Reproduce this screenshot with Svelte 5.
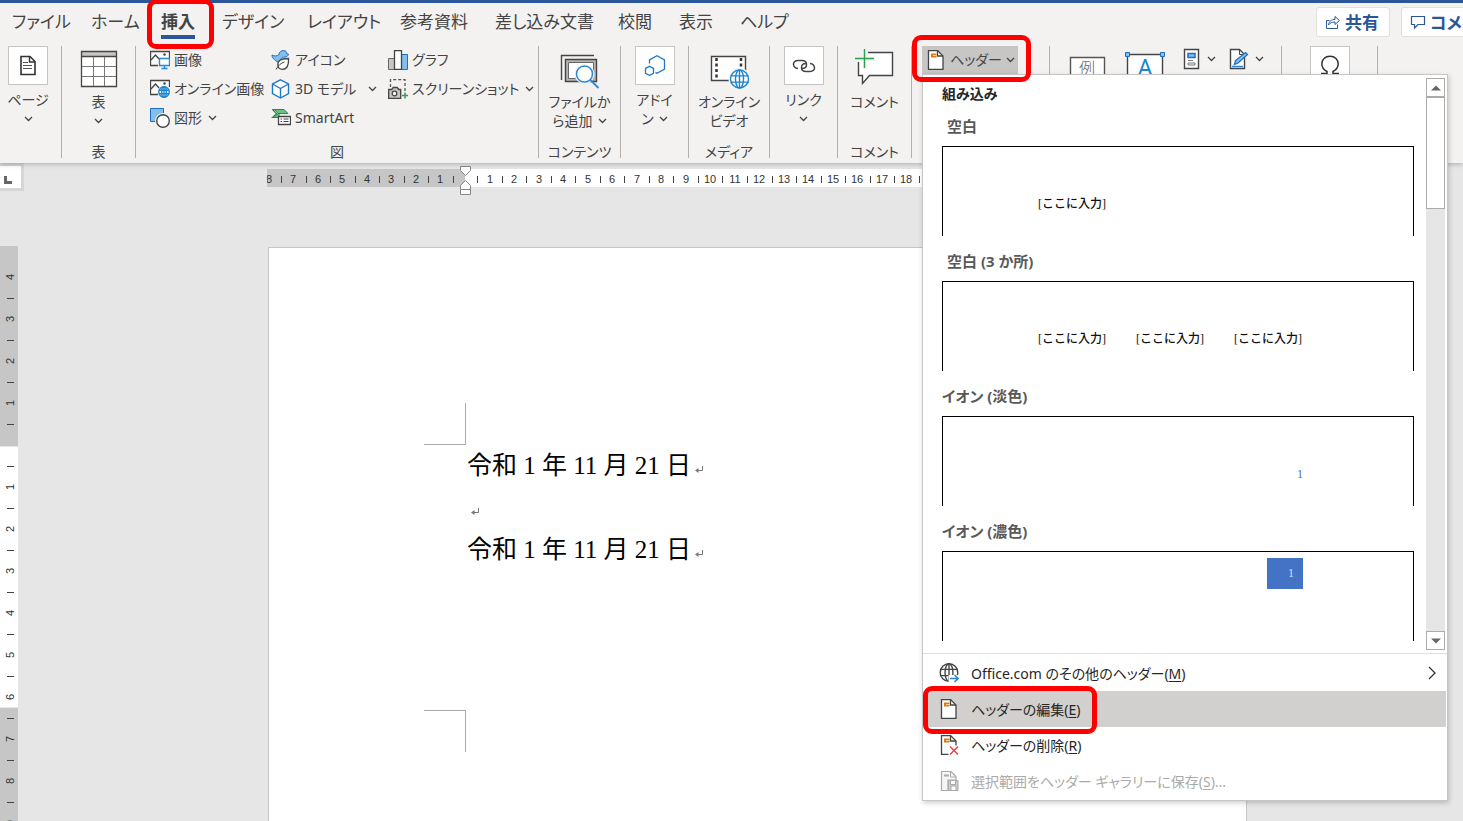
<script>
  const tabs = [
    { label: 'ファイル', w: 79 },
    { label: 'ホーム', w: 70 },
    { label: '挿入', w: 61, active: true },
    { label: 'デザイン', w: 85 },
    { label: 'レイアウト', w: 93 },
    { label: '参考資料', w: 95 },
    { label: '差し込み文書', w: 123 },
    { label: '校閲', w: 61 },
    { label: '表示', w: 61 },
    { label: 'ヘルプ', w: 60 },
  ];
  const tabColumns = tabs.map((t) => t.w + 'px').join(' ');

  const pictures = [
    { icon: 'image', label: '画像' },
    { icon: 'icons', label: 'アイコン' },
    { icon: 'chart', label: 'グラフ' },
    { icon: 'online', label: 'オンライン画像' },
    { icon: 'cube', label: '3D モデル', menu: true, wide: true },
    { icon: 'screenshot', label: 'スクリーンショット', menu: true },
    { icon: 'shapes', label: '図形', menu: true },
    { icon: 'smartart', label: 'SmartArt' },
  ];

  const gallery = [
    { title: '空白', inset: true, fields: 1 },
    { title: '空白 (3 か所)', inset: true, fields: 3 },
    { title: 'イオン (淡色)', number: 'light' },
    { title: 'イオン (濃色)', number: 'dark' },
  ];

  const commands = [
    { icon: 'globe', label: 'Office.com のその他のヘッダー', key: 'M', more: true },
    { icon: 'edit', label: 'ヘッダーの編集', key: 'E', active: true },
    { icon: 'remove', label: 'ヘッダーの削除', key: 'R' },
    { icon: 'save', label: '選択範囲をヘッダー ギャラリーに保存', key: 'S', tail: '...', disabled: true },
  ];

  const hUnit = 24.52;
  const hMarks = [];
  for (let i = -16; i <= 62; i++) {
    if (i === 0) continue;
    hMarks.push({ x: Math.round(198 + (i * hUnit) / 2), n: i % 2 === 0 ? Math.abs(i / 2) : null });
  }
  const vMarks = [];
  for (let i = -8; i <= 18; i++) {
    if (i === 0) continue;
    vMarks.push({ y: 199 + i * 21, n: i % 2 === 0 ? Math.abs(i / 2) : null });
  }
</script>

{#snippet chevron()}
  <svg class="chevron" width="9" height="6" viewBox="0 0 9 6" aria-hidden="true"><path d="M1 1l3.5 3.5L8 1" fill="none" stroke="#444" stroke-width="1.3" /></svg>
{/snippet}

{#snippet globe(cx, cy, r, color)}
  <g fill="none" stroke={color} stroke-width="1.4">
    <circle {cx} {cy} {r} fill="#fff" />
    <ellipse {cx} {cy} rx={r * 0.45} ry={r} />
    <path d={`M${cx} ${cy - r}v${2 * r}M${cx - r} ${cy - r * 0.35}h${2 * r}M${cx - r} ${cy + r * 0.35}h${2 * r}`} />
  </g>
{/snippet}

{#snippet mark()}
  <svg class="mark" width="9" height="9" viewBox="0 0 9 9" aria-hidden="true"><path d="M7.5 0v4.5H2" fill="none" stroke="#777" /><path d="M0 4.5L3.5 2v5z" fill="#777" /></svg>
{/snippet}

{#snippet icon(name)}
  <svg class="icon" width="20" height="20" viewBox="0 0 20 20" fill="none" aria-hidden="true">
    {#if name === 'image' || name === 'online'}
      <path d="M8 15.5H.5v-14h19V8" fill="#fafafa" stroke="#444" stroke-width="1.3" />
      <path d="M1 10l4.5-5L9 9" stroke="#444" stroke-width="1.3" />
      <circle cx="14.5" cy="4.5" r="1.2" fill="#444" />
      {#if name === 'image'}
        <path d="M9.5 8.500h10v7h-10zM14.500 15.500v3M11.500 18.500h6" fill="#fff" stroke="#2b88d8" stroke-width="1.400" />
      {:else}
        {@render globe(14, 13, 5.2, '#1e84cf')}
      {/if}
    {:else if name === 'shapes'}
      <path d="M.5.500h13v13H.5z" fill="#83beec" stroke="#1e6fbf" />
      <circle cx="13" cy="13" r="8" fill="#f3f2f1" />
      <circle cx="13" cy="13" r="6.3" fill="#fff" stroke="#444" stroke-width="1.4" />
    {:else if name === 'icons'}
      <path d="M1 5c2.500 1.500 5 1.200 7-.5C8 2 10 .6 12.500.6 15 .6 16 2.200 15.500 3.500l2 .7c-.5 2-2 2.800-3.500 2.800-2 0-3.500 1-4.500 2.500C8 12.500 5 12 3.500 9.500 1.800 8.500 1 7 1 5z" fill="#83beec" stroke="#1e6fbf" />
      <path d="M7 15.500C6 11.500 9 8.500 17.500 8.500c.4 6.500-1.500 10.800-6 10.800C8.500 19.300 7.200 18 7 15.500z" fill="#fff" stroke="#444" stroke-width="1.300" />
      <path d="M5 19.500c2-4 5-6.500 8.500-7.500" stroke="#444" />
    {:else if name === 'cube'}
      <path d="M9.500.8l8 4.200v9.500l-8 4.500-8-4.500V5z" fill="#fff" stroke="#1e78c8" stroke-width="1.400" />
      <path d="M1.500 5l8 4.500 8-4.500M9.500 9.500V19" stroke="#1e78c8" stroke-width="1.400" />
    {:else if name === 'smartart'}
      <path d="M1.500 1.500H13l4 4H7L3.500 1.500zM3 9.500L7 5.500h1v4z" fill="#6cc088" stroke="#218a42" />
      <path d="M1.500 1.500l4 4.200-4 3.800H7" stroke="#218a42" stroke-width="1.200" />
      <path d="M7.500 8.500h12v8h-12z" fill="#fff" stroke="#444" stroke-width="1.300" />
      <path d="M9.500 11H11M12.500 11h5M9.500 13.500H11M12.500 13.500h5" stroke="#444" />
    {:else if name === 'chart'}
      <path d="M.5 8.500h6v11h-6z" fill="#c8c6c4" stroke="#666" />
      <path d="M13.500 4.500h6v15h-6z" fill="#83beec" stroke="#1e6fbf" />
      <path d="M6.500.5h7v19h-7z" fill="#fff" stroke="#444" stroke-width="1.300" />
    {:else if name === 'screenshot'}
      <path d="M2.500 8V.7h14.500V13" stroke="#555" stroke-width="1.300" stroke-dasharray="3 2" />
      <path d="M.7 10.500h3l1.500-2h4l1.500 2h2v8.800H.7z" fill="#c8c6c4" stroke="#444" stroke-width="1.300" />
      <circle cx="6.500" cy="14.500" r="2.300" fill="#fff" stroke="#444" stroke-width="1.300" />
      <path d="M14 16.500h6M17 13.500v6" stroke="#2ea051" stroke-width="1.500" />
    {:else if name === 'globe'}
      {@render globe(10, 9.500, 8.800, '#444')}
      <path d="M9.500 12H20v8H9.500z" fill="#fff" />
      <path d="M11 15.500h8M15.500 12l3.500 3.500-3.500 3.500" stroke="#2b88d8" stroke-width="1.600" />
    {:else if name === 'edit' || name === 'remove'}
      <path d="M2.500.5h9l5.500 5.500v13.500H2.500z" fill="#fff" stroke="#444" stroke-width="1.300" />
      <path d="M11.500.5V6H17" stroke="#444" stroke-width="1.300" />
      <path d="M5 3.500h5.500v4H5z" fill="#e07a10" />
      <path d="M7 5.500h3.500" stroke="#f8d9b0" />
      {#if name === 'remove'}
        <path d="M9.500 10.500H20V20H9.500z" fill="#fff" />
        <path d="M11 11.500l8 8M19 11.500l-8 8" stroke="#e03c3c" stroke-width="1.300" />
      {/if}
    {:else if name === 'save'}
      <path d="M2.500.5H12l5 5V9H9v10.500H2.500z" fill="#f5f5f5" stroke="#aaa" stroke-width="1.200" />
      <path d="M11.500.5V6H17" stroke="#aaa" />
      <path d="M5 4.500h5" stroke="#aaa" stroke-width="2" />
      <path d="M9.500 9.500H19v10H9.500z" fill="#ccc" stroke="#aaa" />
      <path d="M11.500 9.500h5v4h-5zM12 19v-4h5v4" fill="#fff" stroke="#aaa" />
    {/if}
  </svg>
{/snippet}

<svelte:head><title>Word</title></svelte:head>

<div class="app">
  <header class="ribbon">
    <div class="top">
      <nav class="tabs" style:grid-template-columns={tabColumns}>
        {#each tabs as tab}
          <button class="tab" class:active={tab.active}>
            <span>{tab.label}</span>
            {#if tab.active}<i class="ring ring-tab"></i>{/if}
          </button>
        {/each}
      </nav>
      <div class="actions">
        <button class="action">
          <svg width="16" height="16" viewBox="0 0 16 16" fill="none" stroke="#2b579a" aria-hidden="true"><path d="M4.500 6.500h-3v8h11v-4" /><path d="M3.500 11c.5-4 3-5.500 6.500-5.500V2.500l4.500 4-4.500 4V8C7 8 5 8.800 3.500 11z" /></svg>
          共有
        </button>
        <button class="action">
          <svg width="16" height="16" viewBox="0 0 16 16" fill="none" stroke="#2b579a" stroke-width="1.200" aria-hidden="true"><path d="M1.500 2.500h13v8H8L4.500 14v-3.500h-3z" /></svg>
          コメント
        </button>
      </div>
    </div>

    <div class="panel">
      <section class="group page-group">
        <button class="big">
          <span class="tile"><svg width="20" height="22" viewBox="0 0 20 22" fill="none" stroke="#333" aria-hidden="true"><path d="M3 1.500h9l5 5v13H3z" stroke-width="1.600" /><path d="M11.500 1.500V7H17" stroke-width="1.400" /><path d="M5 7.500h5M5 10.500h9M5 13.500h9" stroke="#555" /></svg></span>
          <span>ページ</span>
          <span>{@render chevron()}</span>
        </button>
      </section>

      <section class="group table-group">
        <button class="big">
          <svg width="44" height="46" viewBox="0 0 44 46" aria-hidden="true">
            <path d="M4.500 5.500h35v35h-35z" fill="#fff" /><path d="M4.500 5.500h35v5h-35z" fill="#c8c6c4" />
            <path d="M4.500 5.500h35v35h-35zM4.500 10.500h35" fill="none" stroke="#444" stroke-width="1.300" />
            <path d="M16.500 11v29M27.500 11v29M5 20.500h34M5 30.500h34" stroke="#777" />
          </svg>
          <span>表</span>
          <span>{@render chevron()}</span>
        </button>
        <h2>表</h2>
      </section>

      <section class="group pictures-group">
        <div class="rows">
          {#each pictures as p}
            <button class="small" class:wide={p.wide}>
              {@render icon(p.icon)}
              <span>{p.label}</span>
              {#if p.menu}{@render chevron()}{/if}
            </button>
          {/each}
        </div>
        <h2>図</h2>
      </section>

      <section class="group files-group">
        <button class="big">
          <svg width="44" height="46" viewBox="0 0 44 46" fill="none" aria-hidden="true">
            <path d="M4.500 34V9.500H37" stroke="#444" stroke-width="1.400" />
            <path d="M8.500 13.500h31v22h-31z" fill="#b8b6b4" stroke="#444" stroke-width="1.400" />
            <path d="M11.500 16.500h25v16h-25z" fill="#fff" stroke="#666" />
            <circle cx="27.500" cy="28" r="10" fill="#f3f2f1" />
            <circle cx="27.500" cy="28" r="8" fill="#fff" stroke="#2b88d8" stroke-width="1.500" />
            <path d="M33.500 34l8 8" stroke="#2b88d8" stroke-width="1.800" />
          </svg>
          <span>ファイルか</span>
          <span>ら追加 {@render chevron()}</span>
        </button>
        <h2>コンテンツ</h2>
      </section>

      <section class="group tile-group">
        <button class="big">
          <span class="tile"><svg width="24" height="24" viewBox="0 0 24 24" fill="none" stroke="#1e78c8" stroke-width="1.300" aria-hidden="true"><path d="M6.500 9.500V6l7.500-4.200L21.500 6v9L14 19.200 12.500 18.400" /><path d="M6.500 12.300l4 2v5l-4 2-4-2v-5z" /></svg></span>
          <span>アドイ</span>
          <span>ン {@render chevron()}</span>
        </button>
      </section>

      <section class="group media-group">
        <button class="big">
          <svg width="44" height="46" viewBox="0 0 44 46" fill="none" aria-hidden="true">
            <path d="M4.500 10.500h34v24h-34z" fill="#fff" stroke="#444" stroke-width="1.400" />
            <path d="M9.500 12v22M34 12v22" stroke="#333" stroke-width="2.500" stroke-dasharray="3 2.500" />
            <circle cx="32.500" cy="33" r="11" fill="#f3f2f1" />
            {@render globe(32.500, 33, 9, '#1e84cf')}
          </svg>
          <span>オンライン</span>
          <span>ビデオ</span>
        </button>
        <h2>メディア</h2>
      </section>

      <section class="group tile-group">
        <button class="big">
          <span class="tile"><svg width="24" height="20" viewBox="0 0 24 20" fill="none" stroke="#444" stroke-width="1.500" aria-hidden="true"><path d="M6 12.500C.5 12-.5 4.500 6 4.500h4c6 0 6 8 0 8" /><path d="M18 7.500c5.500.5 6.500 8 0 8h-4c-6 0-6-8 0-8" /></svg></span>
          <span>リンク</span>
          <span>{@render chevron()}</span>
        </button>
      </section>

      <section class="group comment-group">
        <button class="big">
          <svg width="44" height="46" viewBox="0 0 44 46" fill="none" aria-hidden="true">
            <path d="M5.500 16V29.500h4v8l7-8h23V6.500H15" fill="#fff" stroke="#444" stroke-width="1.400" />
            <path d="M10 3h5v8h7v4h-8v8h-4v-8H2V9h8z" fill="#f3f2f1" />
            <path d="M11.500 3v19M2 12.500h19" stroke="#2ea051" stroke-width="1.400" />
          </svg>
          <span>コメント</span>
        </button>
        <h2>コメント</h2>
      </section>

      <section class="group header-group">
        <button class="header-button" aria-expanded="true">
          {@render icon('edit')}
          <span>ヘッダー</span>
          {@render chevron()}
        </button>
        <i class="ring ring-header"></i>

        <div class="popup">
          <div class="gallery">
            <div class="gallery-list">
              <h3>組み込み</h3>
              {#each gallery as g}
                <button class="entry">
                  <span class="entry-title" class:inset={g.inset}>{g.title}</span>
                  <span class="preview" class:end={g.number} class:top={g.number === 'dark'}>
                    {#if g.fields}
                      {#each Array(g.fields) as _}<span class="field">[ここに入力]</span>{/each}
                    {:else}
                      <span class="number {g.number}">1</span>
                    {/if}
                  </span>
                </button>
              {/each}
            </div>
            <div class="scroll">
              <button class="arrow" aria-label="上へ"><svg width="10" height="6" viewBox="0 0 10 6"><path d="M0 5.500L5 .5l5 5z" fill="#666" /></svg></button>
              <div class="thumb"></div>
              <button class="arrow down" aria-label="下へ"><svg width="10" height="6" viewBox="0 0 10 6"><path d="M0 .5l5 5 5-5z" fill="#666" /></svg></button>
            </div>
          </div>
          <div class="commands">
            {#each commands as c}
              <button class="command" class:active={c.active} disabled={c.disabled}>
                {@render icon(c.icon)}
                <span>{c.label}(<u>{c.key}</u>){c.tail ?? ''}</span>
                {#if c.more}<svg class="more" width="8" height="14" viewBox="0 0 8 14" aria-hidden="true"><path d="M1 1l6 6-6 6" fill="none" stroke="#333" stroke-width="1.300" /></svg>{/if}
                {#if c.active}<i class="ring ring-command"></i>{/if}
              </button>
            {/each}
          </div>
        </div>
      </section>

      <section class="group text-group">
        <button class="plain" aria-label="テキスト ボックス"><svg width="38" height="30" viewBox="0 0 38 30" aria-hidden="true"><path d="M1.500 30V11.500h34V30" fill="#fff" stroke="#555" stroke-width="1.400" /><text x="18" y="28" text-anchor="middle" font-size="16" font-weight="300" fill="#666">例</text></svg></button>
        <button class="plain" aria-label="ワードアート"><svg width="40" height="30" viewBox="0 0 40 30" aria-hidden="true"><path d="M2.500 30V8.500h35V30" fill="#fff" stroke="#444" stroke-width="1.400" /><path d="M.5 6.500h4v4h-4zM35.500 6.500h4v4h-4z" fill="#83beec" stroke="#1e6fbf" /><text x="20" y="30" text-anchor="middle" font-size="23" fill="#1e84cf">A</text></svg></button>
        <div class="pair">
          <button class="plain" aria-label="クイック パーツ"><svg width="18" height="22" viewBox="0 0 18 22" fill="none" aria-hidden="true"><path d="M1.500 1.500h14v19h-14z" fill="#fff" stroke="#444" stroke-width="1.400" /><path d="M5 5.500h7v4H5z" fill="#83beec" stroke="#1e6fbf" stroke-width="1.500" /><path d="M5 12.500h5M5 17h7v-2H5z" stroke="#777" /></svg>{@render chevron()}</button>
          <button class="plain" aria-label="署名欄"><svg width="20" height="22" viewBox="0 0 20 22" fill="none" aria-hidden="true"><path d="M1.500 1.500h9l5 5v14h-14z" fill="#fff" stroke="#444" stroke-width="1.400" /><path d="M10.500 1.500v5h5" stroke="#444" /><path d="M3 18.500h11" stroke="#2b88d8" stroke-width="1.500" /><path d="M5.500 16.500l1-4 10-8 2 2-9.500 8.500z" fill="#83beec" stroke="#1e6fbf" stroke-width="1.300" /></svg>{@render chevron()}</button>
        </div>
      </section>

      <section class="group symbol-group">
        <button class="big" aria-label="記号と特殊文字"><span class="tile"><svg width="20" height="22" viewBox="0 0 20 22" fill="none" stroke="#333" stroke-width="1.500" aria-hidden="true"><path d="M1 18.500h6v-2C3.500 14.500 1.800 12 1.800 9 1.800 4.500 5 1.200 10 1.200S18.200 4.500 18.200 9c0 3-1.700 5.500-5.200 7.500v2h6" /></svg></span></button>
      </section>
    </div>
  </header>

  <main class="workspace">
    <div class="ruler-row">
      <button class="corner" aria-label="タブ"><svg width="9" height="8" viewBox="0 0 9 8"><path d="M1.500 0v6.500H8" fill="none" stroke="#666" stroke-width="3" /></svg></button>
      <div class="hruler">
        <svg width="980" height="32" aria-hidden="true">
          <path d="M0 6h198v18H0z" fill="#c6c6c6" /><path d="M198 6h782v18H198z" fill="#fff" />
          {#each hMarks as m}
            {#if m.n}<text x={m.x} y="20" text-anchor="middle" class="digit">{m.n}</text>{:else}<path d={`M${m.x + 0.5} 13v7`} stroke="#444" />{/if}
          {/each}
          <path d="M193.500 3.500h10v4l-5 5-5-5zM193.500 26.500v-4l5-5 5 5v9h-10zM193.500 26.500h10" fill="#fff" stroke="#888" />
        </svg>
      </div>
    </div>
    <div class="doc-row">
      <svg class="vruler" width="18" height="575" aria-hidden="true">
        <path d="M0 0h18v200H0zM0 462h18v120H0z" fill="#c6c6c6" /><path d="M0 201h18v260H0z" fill="#fff" />
        {#each vMarks as m}
          {#if m.n}<text text-anchor="middle" transform={`translate(14 ${m.y}) rotate(-90)`} class="digit">{m.n}</text>{:else}<path d={`M7 ${m.y + 0.5}h7`} stroke="#444" />{/if}
        {/each}
      </svg>
      <article class="paper">
        <div class="crop first"></div>
        <div class="text">
          <p>令和 1 年 11 月 21 日{@render mark()}</p>
          <p>{@render mark()}</p>
          <p>令和 1 年 11 月 21 日{@render mark()}</p>
        </div>
        <div class="crop last"></div>
      </article>
    </div>
  </main>
</div>

<style>
  :global(body) { margin: 0; }
  .app {
    min-height: 100vh;
    display: flex;
    flex-direction: column;
    overflow: hidden;
    background: #e6e6e6;
    color: #444;
    font-family: "Noto Sans", "Noto Sans CJK JP", sans-serif;
    font-size: 14px;
    line-height: 19px;
    font-feature-settings: "palt";
  }
  button {
    font: inherit;
    font-feature-settings: inherit;
    color: inherit;
    background: none;
    border: 0;
    padding: 0;
    margin: 0;
    text-align: left;
  }
  svg { display: block; flex: none; }
  h2, h3, p { margin: 0; font-weight: 400; }

  .ribbon {
    position: relative;
    z-index: 2;
    background: #f3f2f1;
    border-top: 3px solid #2b579a;
    box-shadow: 0 1px 5px rgba(0, 0, 0, 0.25);
  }
  .top { display: flex; height: 38px; }
  .tabs { display: grid; flex: 1; padding-left: 12px; }
  .tab {
    position: relative;
    display: flex;
    align-items: flex-start;
    font-size: 17px;
    line-height: 38px;
    white-space: nowrap;
  }
  .tab.active span {
    height: 36px;
    box-sizing: border-box;
    font-weight: 700;
    border-bottom: 4px solid #2b579a;
  }
  .actions { display: flex; gap: 11px; flex: 0 0 147px; min-width: 0; padding-top: 4px; }
  .action {
    display: flex;
    flex: none;
    align-items: center;
    gap: 4px;
    height: 30px;
    padding: 0 10px 0 8px;
    box-sizing: border-box;
    background: #fff;
    border: 1px solid #e1dfdd;
    border-radius: 3px;
    color: #2b579a;
    font-size: 17px;
    font-weight: 700;
    white-space: nowrap;
  }

  .panel { display: flex; padding: 5px 0; }
  .group {
    position: relative;
    display: flex;
    flex-direction: column;
    flex: none;
    align-items: center;
    justify-content: space-between;
    height: 112px;
    box-sizing: border-box;
    border-right: 1px solid #b3b0ad;
  }
  .group h2 { font-size: 14px; line-height: 13px; }
  .page-group { width: 62px; padding-right: 5px; }
  .table-group { width: 74px; }
  .pictures-group { width: 403px; }
  .files-group { width: 82px; }
  .tile-group { width: 68px; }
  .media-group { width: 81px; }
  .comment-group { width: 74px; }
  .header-group { width: 138px; align-items: flex-start; padding-left: 10px; }
  .text-group { width: 232px; flex-direction: row; justify-content: flex-start; align-items: flex-start; padding-left: 19px; gap: 18px; }
  .pair { display: flex; gap: 13px; padding-top: 2px; }
  .symbol-group { width: 96px; }

  .big { display: flex; flex-direction: column; align-items: center; white-space: nowrap; }
  .big > span:not(.tile) { display: flex; align-items: center; gap: 5px; height: 19px; }
  .tile {
    display: flex;
    align-items: center;
    justify-content: center;
    width: 40px;
    height: 39px;
    box-sizing: border-box;
    margin-bottom: 5px;
    background: #fff;
    border: 1px solid #c8c6c4;
  }
  .rows {
    display: grid;
    grid-template-columns: 121px 117px 1fr;
    grid-auto-rows: 29px;
    align-self: stretch;
    padding-left: 14px;
  }
  .small { display: flex; align-items: center; gap: 4px; padding-bottom: 2px; white-space: nowrap; }
  .small .chevron { margin-left: 2px; }
  .small.wide .chevron { margin-left: 8px; }
  .plain { display: flex; align-items: center; gap: 6px; }

  .header-button {
    display: flex;
    align-items: center;
    gap: 4px;
    width: 96px;
    height: 29px;
    padding: 0 0 2px 4px;
    box-sizing: border-box;
    background: #c8c6c4;
    white-space: nowrap;
  }

  .ring {
    position: absolute;
    z-index: 9;
    box-sizing: border-box;
    border: 5px solid #f00;
    border-radius: 9px;
    pointer-events: none;
  }
  .ring-tab { left: -14px; top: -4px; width: 67px; height: 50px; }
  .ring-header { left: 0; top: -11px; width: 119px; height: 47px; }
  .ring-command { left: -1px; top: -5px; width: 174px; height: 48px; }

  .popup {
    position: absolute;
    z-index: 5;
    left: 10px;
    top: 28px;
    width: 526px;
    box-sizing: border-box;
    padding-bottom: 1px;
    background: #fff;
    border: 1px solid #c6c6c6;
    box-shadow: 1px 2px 5px rgba(0, 0, 0, 0.2);
    color: #262626;
  }
  .gallery { display: flex; padding-right: 2px; border-bottom: 1px solid #e1dfdd; }
  .gallery-list { flex: 1; padding: 11px 12px 12px 19px; }
  h3 { font-size: 14px; line-height: 15px; font-weight: 700; }
  .entry { display: block; width: 100%; }
  .entry-title {
    display: block;
    padding: 15px 0 10px;
    font-size: 15px;
    line-height: 20px;
    font-weight: 700;
    color: #595959;
  }
  .inset { padding-left: 5px; }
  .preview {
    display: flex;
    align-items: center;
    gap: 30px;
    height: 90px;
    box-sizing: border-box;
    padding: 24px 0 0 95px;
    border: 1px solid #000;
    border-bottom: 0;
    font: 500 12px/16px "Liberation Serif", "Noto Sans CJK JP", serif;
    font-feature-settings: normal;
    color: #111;
  }
  .preview.end { justify-content: flex-end; padding-right: 110px; }
  .preview.top { align-items: flex-start; padding-top: 6px; }
  .number { color: #4472c4; }
  .number.dark {
    width: 36px;
    height: 31px;
    line-height: 31px;
    padding-right: 9px;
    box-sizing: border-box;
    text-align: right;
    background: #4472c4;
    color: #d6e0f2;
  }
  .scroll { display: flex; flex-direction: column; width: 19px; margin: 3px 0; background: #e6e6e6; }
  .arrow {
    display: flex;
    align-items: center;
    justify-content: center;
    height: 19px;
    box-sizing: border-box;
    background: #fff;
    border: 1px solid #ababab;
  }
  .arrow.down { margin-top: auto; }
  .thumb { height: 112px; box-sizing: border-box; background: #fff; border: 1px solid #ababab; }

  .commands { padding: 1px 1px 0; }
  .command {
    position: relative;
    display: flex;
    align-items: center;
    gap: 12px;
    width: 100%;
    height: 36px;
    padding: 0 10px 0 15px;
    white-space: nowrap;
  }
  .command.active { background: #d2d0ce; }
  .command:disabled { color: #aaa; }
  .command u { text-underline-offset: 2px; }
  .more { margin-left: auto; }

  .workspace { flex: 1; display: flex; flex-direction: column; }
  .ruler-row { display: flex; height: 83px; }
  .corner {
    display: flex;
    align-items: center;
    justify-content: center;
    width: 24px;
    height: 28px;
    box-sizing: border-box;
    padding: 6px 4px 0 0;
    background: #fff;
    border: 3px solid #d6d6d6;
    border-left: 0;
  }
  .hruler { flex: 1; margin: 0 216px 0 243px; overflow: hidden; }
  .digit { font: 11px "Liberation Sans", sans-serif; fill: #333; }
  .doc-row { flex: 1; display: flex; }
  .paper {
    flex: 1;
    margin: 1px 216px 0 250px;
    padding-left: 155px;
    background: #fff;
    border: 1px solid #c6c6c6;
    border-bottom: 0;
  }
  .crop { width: 42px; height: 42px; box-sizing: border-box; border-right: 1px solid #aaa; }
  .crop.first { margin-top: 155px; border-bottom: 1px solid #aaa; }
  .crop.last { margin-top: 139px; border-top: 1px solid #aaa; }
  .text {
    padding-left: 43px;
    color: #000;
    font-family: "Liberation Serif", "Noto Sans CJK JP", serif;
    font-size: 25px;
    font-weight: 300;
    line-height: 42px;
    font-feature-settings: normal;
  }
  .text p { display: flex; align-items: center; height: 42px; white-space: pre; }
  .mark { margin: 8px 0 0 4px; }
</style>
